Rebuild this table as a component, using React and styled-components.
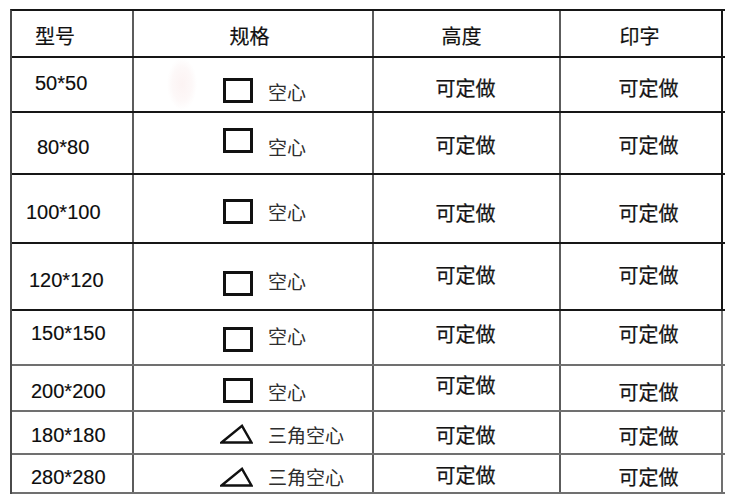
import React from 'react';
import styled, { createGlobalStyle } from 'styled-components';

const GlobalStyle = createGlobalStyle`
  html, body {
    margin: 0;
    padding: 0;
    background: #fff;
  }
  body {
    font-family: "Liberation Sans", "Noto Sans CJK SC", sans-serif;
    color: #111;
  }
`;

const DARK = '#161616';
const GREY = '#707070';

const Page = styled.div`
  width: 750px;
  height: 497px;
  overflow: hidden;
  padding: 9px 0 0 10px;
  box-sizing: border-box;
`;

const Table = styled.div`
  display: flex;
  flex-direction: column;
  width: 713px;
  border-top: 2px solid ${DARK};
  border-left: 2px solid #4a4a4a;
`;

const Row = styled.div`
  display: grid;
  grid-template-columns: 122px 240px 187px 162px;
  height: ${p => p.$h}px;
  box-sizing: border-box;
  border-bottom: 2px solid ${p => p.$line};
`;

const Cell = styled.div`
  display: flex;
  align-items: center;
  justify-content: ${p => p.$align || 'center'};
  box-sizing: border-box;
  padding-left: ${p => p.$pl || 0}px;
  border-right: 2px solid ${p => p.$line || '#5c5c5c'};
  background: ${p => p.$smudge
    ? 'radial-gradient(ellipse 15px 26px at 48px 26px, #fcf3f3 0%, #fdf8f8 65%, #fff 100%)'
    : 'transparent'};
`;

// nudges an item up or down inside a flex-centred cell
const Nudge = styled.span`
  display: inline-flex;
  align-items: center;
  margin-top: ${p => (p.$dy > 0 ? p.$dy * 2 : 0)}px;
  margin-bottom: ${p => (p.$dy < 0 ? -p.$dy * 2 : 0)}px;
  margin-left: ${p => p.$dx || 0}px;
`;

const HeadText = styled(Nudge)`
  font-family: "Noto Sans CJK SC", sans-serif;
  font-size: 20px;
  line-height: 24px;
  color: #111;
  -webkit-text-stroke: 0.2px #111;
`;

const ModelText = styled(Nudge)`
  font-family: "Liberation Sans", sans-serif;
  font-size: 20px;
  line-height: 24px;
  color: #0d0d0d;
  -webkit-text-stroke: 0.15px #0d0d0d;
`;

const MadeText = styled(Nudge)`
  font-family: "Noto Sans CJK SC", sans-serif;
  font-size: 20px;
  line-height: 24px;
  color: #141414;
  -webkit-text-stroke: 0.25px #141414;
`;

const SpecLabel = styled(Nudge)`
  font-family: "Noto Sans CJK SC", sans-serif;
  font-size: 19px;
  line-height: 24px;
  color: #2e2e2e;
  margin-left: 15px;
`;

const Square = () => (
  <svg width="33" height="25" viewBox="0 0 33 25">
    <rect x="4.5" y="1.5" width="27" height="22" fill="none" stroke="#111" strokeWidth="3" />
  </svg>
);

const Triangle = () => (
  <svg width="33" height="20" viewBox="0 0 33 20">
    <polygon points="1.5,18.5 22,1.8 31.5,18.5" fill="none" stroke="#111" strokeWidth="2.4" strokeLinejoin="miter" />
  </svg>
);

const rows = [
  { h: 55, model: '50*50', pl: 23, mdy: -2, shape: 'square', sdy: 6, label: '空心', ldy: 7, c3: 3.5, c4: 3.5, line: DARK, smudge: true },
  { h: 62, model: '80*80', pl: 25, mdy: 3.5, shape: 'square', sdy: -2.5, label: '空心', ldy: 4, c3: 2, c4: 2, line: DARK },
  { h: 69, model: '100*100', pl: 14, mdy: 3.5, shape: 'square', sdy: 2.5, label: '空心', ldy: 3.5, c3: 4.5, c4: 4.5, line: DARK },
  { h: 67, model: '120*120', pl: 17, mdy: 3.5, shape: 'square', sdy: 7, label: '空心', ldy: 4.5, c3: -2, c4: -2, line: DARK },
  { h: 55, model: '150*150', pl: 19, mdy: -4.5, shape: 'square', sdy: 1.5, label: '空心', ldy: -1.5, c3: -4, c4: -4, line: GREY },
  { h: 46, model: '200*200', pl: 19, mdy: 3, shape: 'square', sdy: 2, label: '空心', ldy: 3.5, c3: -3, c4: 3.5, line: GREY },
  { h: 43, model: '180*180', pl: 19, mdy: 2.5, shape: 'triangle', sdy: 1.5, label: '三角空心', ldy: 2.5, c3: 2.5, c4: 3.5, line: GREY },
  { h: 39, model: '280*280', pl: 19, mdy: 3, shape: 'triangle', sdy: 3, label: '三角空心', ldy: 3, c3: 1.5, c4: 3, line: GREY },
];

export default function App() {
  return (
    <Page>
      <GlobalStyle />
      <Table>
        <Row $h={47} $line={DARK}>
          <Cell $align="flex-start" $pl={23}><HeadText $dy={2.5}>型号</HeadText></Cell>
          <Cell><HeadText $dy={2.5} $dx={-7}>规格</HeadText></Cell>
          <Cell><HeadText $dy={2.5} $dx={-10}>高度</HeadText></Cell>
          <Cell $line={DARK}><HeadText $dy={2.5} $dx={-3}>印字</HeadText></Cell>
        </Row>
        {rows.map(r => (
          <Row key={r.model} $h={r.h} $line={r.line}>
            <Cell $align="flex-start" $pl={r.pl}>
              <ModelText $dy={r.mdy}>{r.model}</ModelText>
            </Cell>
            <Cell $align="flex-start" $pl={86} $smudge={r.smudge}>
              <Nudge $dy={r.sdy}>{r.shape === 'square' ? <Square /> : <Triangle />}</Nudge>
              <SpecLabel $dy={r.ldy}>{r.label}</SpecLabel>
            </Cell>
            <Cell>
              <MadeText $dy={r.c3} $dx={-2}>可定做</MadeText>
            </Cell>
            <Cell $pl={15} $line={r.line === DARK ? DARK : GREY}>
              <MadeText $dy={r.c4}>可定做</MadeText>
            </Cell>
          </Row>
        ))}
      </Table>
    </Page>
  );
}
